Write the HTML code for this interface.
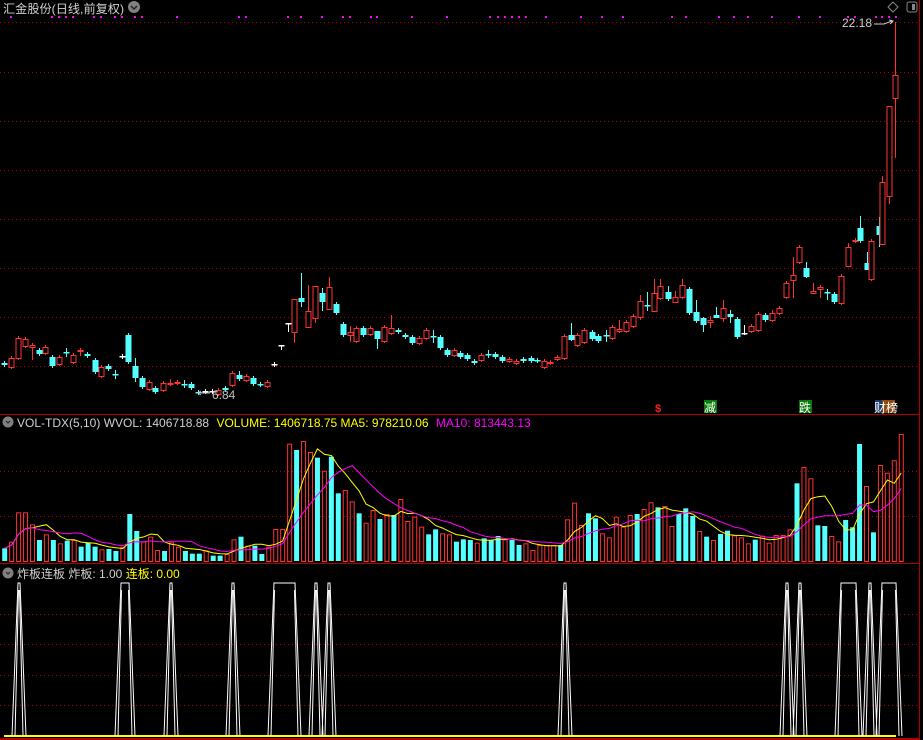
<!DOCTYPE html><html><head><meta charset="utf-8"><style>
html,body{margin:0;padding:0;background:#000;width:923px;height:740px;overflow:hidden}
svg{display:block}
text{font-family:"Liberation Sans","Noto Sans CJK SC",sans-serif}
</style></head><body>
<svg id="s" width="923" height="740" xmlns="http://www.w3.org/2000/svg">
<rect width="923" height="740" fill="#000"/>
<g id="grid" stroke="#b00000" stroke-width="1" stroke-dasharray="1,3"></g>
<g id="c"></g>
<g id="v"></g>
<g id="b"></g>
<line x1="0" y1="414.5" x2="920" y2="414.5" stroke="#b00000"/>
<line x1="0" y1="563.5" x2="920" y2="563.5" stroke="#b00000"/>
<line x1="0" y1="739" x2="920" y2="739" stroke="#b00000" stroke-width="2"/>
<line x1="919.5" y1="0" x2="919.5" y2="740" stroke="#b00000"/>
<text x="3" y="13" fill="#d0d0d0" font-size="12" textLength="121" lengthAdjust="spacingAndGlyphs">汇金股份(日线,前复权)</text>
<circle cx="134" cy="7" r="6" fill="#808080"/><path d="M131 6l3 3 3-3" stroke="#222" fill="none" stroke-width="1.5"/>
<path d="M893 2l5 5-5 5-5-5z" stroke="#888" fill="none"/>
<rect x="907" y="2" width="10" height="10" rx="2" stroke="#888" fill="none"/><rect x="912" y="4" width="3" height="6" fill="#888"/>
<text x="842" y="27" fill="#d0d0d0" font-size="12">22.18</text>
<path d="M874 24h10l8-3M889 20l4 1-3 3" stroke="#d0d0d0" fill="none"/>
<text x="212" y="399" fill="#c0c0c0" font-size="12">6.84</text>
<path d="M198 393h12M198 393l3-2M198 393l3 2" stroke="#c0c0c0" fill="none"/>
<text x="655" y="412" fill="#ff2020" font-size="11" font-weight="bold">$</text>
<rect x="704" y="400" width="13" height="13" fill="#0a7a0a"/><text x="704" y="412" fill="#fff" font-size="12">减</text>
<rect x="799" y="400" width="13" height="13" fill="#0a7a0a"/><text x="799" y="412" fill="#fff" font-size="12">跌</text>
<rect x="875" y="400" width="7" height="13" fill="#1a3a6a"/><rect x="882" y="400" width="13" height="13" fill="#8a4a10"/><text x="874" y="412" fill="#fff" font-size="12">财榜</text>
<circle cx="8" cy="422" r="5.5" fill="#808080"/><path d="M6 421l2 2 2-2" stroke="#222" fill="none"/>
<text x="17" y="427" font-size="12"><tspan fill="#d0d0d0">VOL-TDX(5,10) WVOL: 1406718.88 </tspan><tspan fill="#ffff00" dx="4">VOLUME: 1406718.75 MA5: 978210.06 </tspan><tspan fill="#ff00ff" dx="4">MA10: 813443.13</tspan></text>
<circle cx="8" cy="573" r="5.5" fill="#808080"/><path d="M6 572l2 2 2-2" stroke="#222" fill="none"/>
<text x="17" y="578" font-size="12"><tspan fill="#d0d0d0">炸板连板 炸板: 1.00 </tspan><tspan fill="#ffff00">连板: 0.00</tspan></text>
</svg>
<script>
var NS="http://www.w3.org/2000/svg";
function el(p,t,a){var e=document.createElementNS(NS,t);for(var k in a)e.setAttribute(k,a[k]);p.appendChild(e);return e;}
var g=document.getElementById('grid');
[22,72,121,170,219,268,317,366,471,516,614,644,675,705].forEach(function(y){el(g,'line',{x1:0,x2:918,y1:y+.5,y2:y+.5});});
var R="#ff3232",C="#54ffff",W="#ffffff";
var cd=[[4,363,365,'c'],[11,358,367,'r'],[18,338,358,'r'],[25,339,346,'r'],[32,345,347,'r',343,360],[39,350,354,'c'],[45,347,353,'r'],[52,357,366,'c'],[59,357,364,'r'],[66,352,353,'c',348,357],[73,355,362,'r'],[80,350,351,'r',348,356],[87,354,356,'c'],[95,360,372,'c'],[101,367,376,'r'],[108,366,369,'c'],[115,374,375,'c',370,379],[122,356,357,'w'],[128,335,362,'c'],[135,366,378,'c',358,382],[142,378,387,'c'],[149,382,389,'r'],[155,388,392,'c'],[163,383,390,'r'],[170,383,384,'r',379,386],[177,382,383,'r'],[184,384,385,'c',380,388],[191,384,388,'c'],[198,392,393,'c'],[205,391,392,'w'],[212,391,392,'w'],[218,390,394,'r'],[225,388,390,'c'],[232,373,385,'r'],[239,375,379,'c',371,381],[246,376,380,'r'],[253,378,384,'c'],[260,384,385,'c'],[267,382,386,'r'],[274,364,365,'w'],[281,345,346,'w',345,350],[288,323,324,'w',323,332],[294,299,332,'r',299,343],[301,298,302,'c',273,307],[308,311,327,'r',285,327],[315,286,318,'r',286,323],[322,293,302,'c',288,311],[329,287,309,'r',277,309],[336,304,313,'c'],[343,324,335,'c'],[350,332,335,'r',326,342],[356,328,341,'r'],[363,328,335,'c'],[370,328,334,'r'],[377,331,339,'c',331,349],[384,327,341,'r'],[391,328,333,'r',315,335],[398,330,332,'c'],[405,335,337,'c'],[412,337,343,'c'],[419,338,343,'r'],[426,330,338,'r'],[433,336,337,'c',330,343],[440,337,348,'c'],[447,350,355,'c'],[454,350,355,'r'],[460,353,357,'c'],[467,355,359,'c'],[474,361,363,'c'],[481,355,360,'r'],[488,354,355,'c',350,358],[495,354,357,'c'],[502,357,361,'c'],[509,359,361,'r'],[516,361,363,'r'],[523,359,361,'c'],[531,358,361,'c'],[537,360,361,'c'],[544,361,367,'r'],[550,362,363,'r'],[557,357,359,'r'],[564,336,358,'r'],[571,335,340,'c',323,341],[577,335,345,'r'],[584,330,342,'r'],[592,332,339,'c'],[598,336,341,'c'],[606,335,336,'c',330,342],[612,327,338,'r'],[619,329,331,'r',320,333],[626,322,331,'r'],[633,316,326,'r'],[640,301,317,'r',295,320],[647,305,306,'c',292,311],[654,293,311,'r',279,311],[660,286,298,'r',279,300],[668,292,299,'c',286,301],[675,297,302,'r',291,302],[682,285,297,'r',279,299],[689,289,313,'c'],[696,312,321,'c',300,323],[703,318,325,'c',317,332],[710,320,322,'r',316,328],[716,315,318,'c',307,318],[723,308,318,'r',300,322],[730,314,317,'c',310,323],[737,319,337,'c'],[744,333,334,'w',325,335],[751,326,331,'r'],[758,314,330,'r'],[765,315,320,'c'],[772,313,320,'r',310,322],[779,308,313,'r'],[786,283,297,'r'],[793,275,280,'r',257,298],[799,247,262,'r'],[806,268,277,'c',262,278],[813,291,293,'r',283,293],[820,287,289,'r',285,298],[827,292,293,'c',289,300],[834,294,302,'c'],[841,276,303,'r'],[848,247,266,'r',243,266],[855,240,241,'r'],[860,228,241,'c',216,243],[867,263,270,'c',252,270],[871,241,279,'r'],[879,226,235,'c',217,247],[882,182,244,'r',176,244],[889,106,196,'r',106,204],[895,75,98,'r',22,158]];
var cg=document.getElementById('c');
cd.forEach(function(d){var x=d[0],t=d[1],b=d[2],col=d[3]=='r'?R:(d[3]=='c'?C:W);var hi=d[4]||t-2,lo=d[5]||b+2;
el(cg,'line',{x1:x+.5,x2:x+.5,y1:hi,y2:lo,stroke:col});
if(d[3]=='r'){el(cg,'rect',{x:x-2,y:t+.5,width:5,height:Math.max(b-t,1),fill:'#000',stroke:col});}
else el(cg,'rect',{x:x-2.5,y:t,width:6,height:Math.max(b-t,1.5),fill:col});});
[11,52,59,66,73,94,101,115,122,135,142,177,239,246,288,301,322,343,350,371,377,412,447,490,498,505,512,519,526,546,581,602,623,672,686,719,734,748,772,799,820,848,855,876,882,889,896].forEach(function(x){el(cg,'rect',{x:x-1,y:16,width:2,height:2,fill:'#ff00ff'});});
var vt=[445,425,337,337,373,420,403,420,430,422,420,440,428,440,448,447,453,440,342,393,425,410,450,453,427,440,453,461,461,451,467,467,462,418,410,437,437,462,440,387,387,131,150,123,156,173,212,170,280,270,304,340,368,330,357,342,345,297,363,350,380,403,388,400,403,425,418,420,428,415,420,408,418,420,435,430,450,435,435,435,435,358,308,375,340,355,400,412,350,380,345,342,327,307,322,318,378,342,325,348,393,410,420,402,392,406,412,430,419,407,428,405,405,388,250,201,235,376,378,408,424,360,382,132,258,397,195,218,181,102];
var vc="crrrrcrcrcrcccrccrccrrrcrrcccrccrrcrccrrrrcrrcrccrrcrrcrcrrrrccrrcccrcccrccrrrrrcrrrccrrrrrcrrcrrcccrcrccrrrcrrrrrcrrccrrcccrcrrr";
var vg=document.getElementById('v');var vals=[],xs=[];
vt.forEach(function(z,i){var y=400+z/3,x=4.7+6.95*i;xs.push(x);vals.push(561-y);var col=vc[i]=='c'?C:R;
if(vc[i]=='c')el(vg,'rect',{x:x-2.5,y:y,width:5,height:561-y,fill:col});else el(vg,'rect',{x:x-2,y:y+.5,width:4,height:561-y,fill:'none',stroke:col});});
function ma(n,col){var p=[];for(var i=0;i<vals.length;i++){var s=0,c=0;for(var j=Math.max(0,i-n+1);j<=i;j++){s+=vals[j];c++;}p.push(xs[i].toFixed(1)+','+(561-s/c).toFixed(1));}el(vg,'polyline',{points:p.join(' '),fill:'none',stroke:col,'stroke-width':1});}
ma(5,'#ffff00');ma(10,'#ff00ff');
var bg=document.getElementById('b');
el(bg,'line',{x1:4,x2:896,y1:736,y2:736,stroke:'#ffff00','stroke-width':2});
[[19,19],[122,128],[171,171],[233,233],[275,294],[316,316],[329,329],[565,565],[787,787],[800,800],[842,855],[870,870],[883,895]].forEach(function(s){var a=s[0],b=s[1];
var pts=[];for(var k=0;k<=5;k++){var y=736-k*30.6;pts.push((a-7+k*1.2).toFixed(1)+','+y.toFixed(1));}
pts.push(a+','+583);pts.push(b+','+583);
for(var k=5;k>=0;k--){var y=736-k*30.6;pts.push((b+7-k*1.2).toFixed(1)+','+y.toFixed(1));}
el(bg,'polyline',{points:pts.join(' '),fill:'none',stroke:'#fff','stroke-width':1});
el(bg,'line',{x1:a-4,y1:736,x2:a-0.5,y2:590,stroke:'#fff'});el(bg,'line',{x1:b+4,y1:736,x2:b+0.5,y2:590,stroke:'#fff'});});
</script>
</body></html>
